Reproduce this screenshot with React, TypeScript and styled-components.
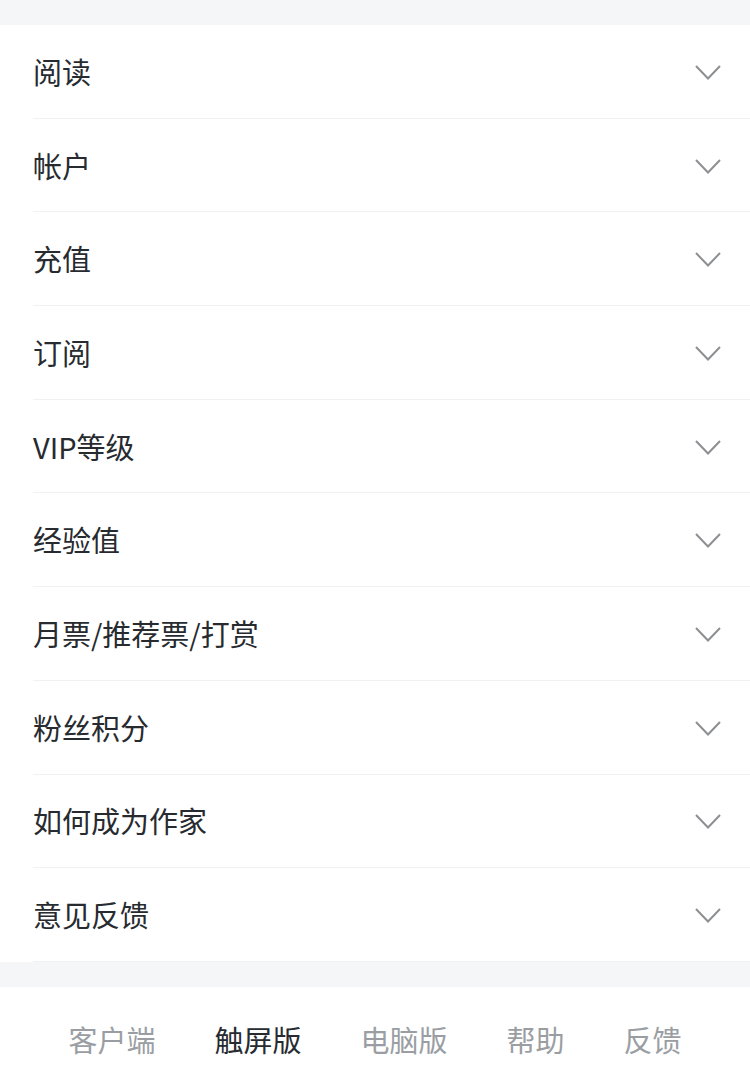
import React from "react";
import styled, { createGlobalStyle } from "styled-components";

const GlobalStyle = createGlobalStyle`
  body {
    margin: 0;
    background: #f5f6f7;
    font-family: "Noto Sans CJK SC", "Noto Sans", sans-serif;
  }
`;

const topics = [
  "阅读",
  "帐户",
  "充值",
  "订阅",
  "VIP等级",
  "经验值",
  "月票/推荐票/打赏",
  "粉丝积分",
  "如何成为作家",
  "意见反馈",
];

const links = [
  { label: "客户端", active: false },
  { label: "触屏版", active: true },
  { label: "电脑版", active: false },
  { label: "帮助", active: false },
  { label: "反馈", active: false },
];

function Chevron() {
  return (
    <ChevronIcon viewBox="0 0 26 15" aria-hidden="true">
      <polyline points="1,1 13,13.5 25,1" />
    </ChevronIcon>
  );
}

function App() {
  return (
    <>
      <GlobalStyle />
      <Page>
        <List>
          {topics.map((t) => (
            <Row key={t}>
              <Title>{t}</Title>
              <Chevron />
            </Row>
          ))}
        </List>
        <Footer>
          {links.map((l) => (
            <FooterLink key={l.label} $active={l.active}>
              {l.label}
            </FooterLink>
          ))}
        </Footer>
      </Page>
    </>
  );
}

const Page = styled.div`
  padding-top: 25px;
  min-height: 1091px;
  box-sizing: border-box;
  background: #f5f6f7;
`;

const List = styled.ul`
  list-style: none;
  margin: 0;
  padding: 0 0 0 33px;
  background: #fff;
`;

const Row = styled.li`
  display: flex;
  align-items: center;
  justify-content: space-between;
  box-sizing: border-box;
  height: 93.7px;
  padding-right: 29px;
  border-bottom: 1px solid #f0f1f2;
`;

const Title = styled.span`
  font-size: 29px;
  color: #272b30;
  line-height: 1;
`;

const ChevronIcon = styled.svg`
  width: 26px;
  height: 15px;
  fill: none;
  stroke: #8d8f92;
  stroke-width: 2;
  margin-top: 2px;
`;

const Footer = styled.nav`
  margin-top: 25px;
  background: #fff;
  height: 104px;
  display: flex;
  justify-content: center;
  align-items: center;
  gap: 59px;
  padding-top: 2px;
  box-sizing: border-box;
`;

const FooterLink = styled.a<{ $active: boolean }>`
  font-size: 29px;
  color: ${(p) => (p.$active ? "#272b30" : "#9a9ea3")};
  text-decoration: none;
  line-height: 1;
`;

export default App;
